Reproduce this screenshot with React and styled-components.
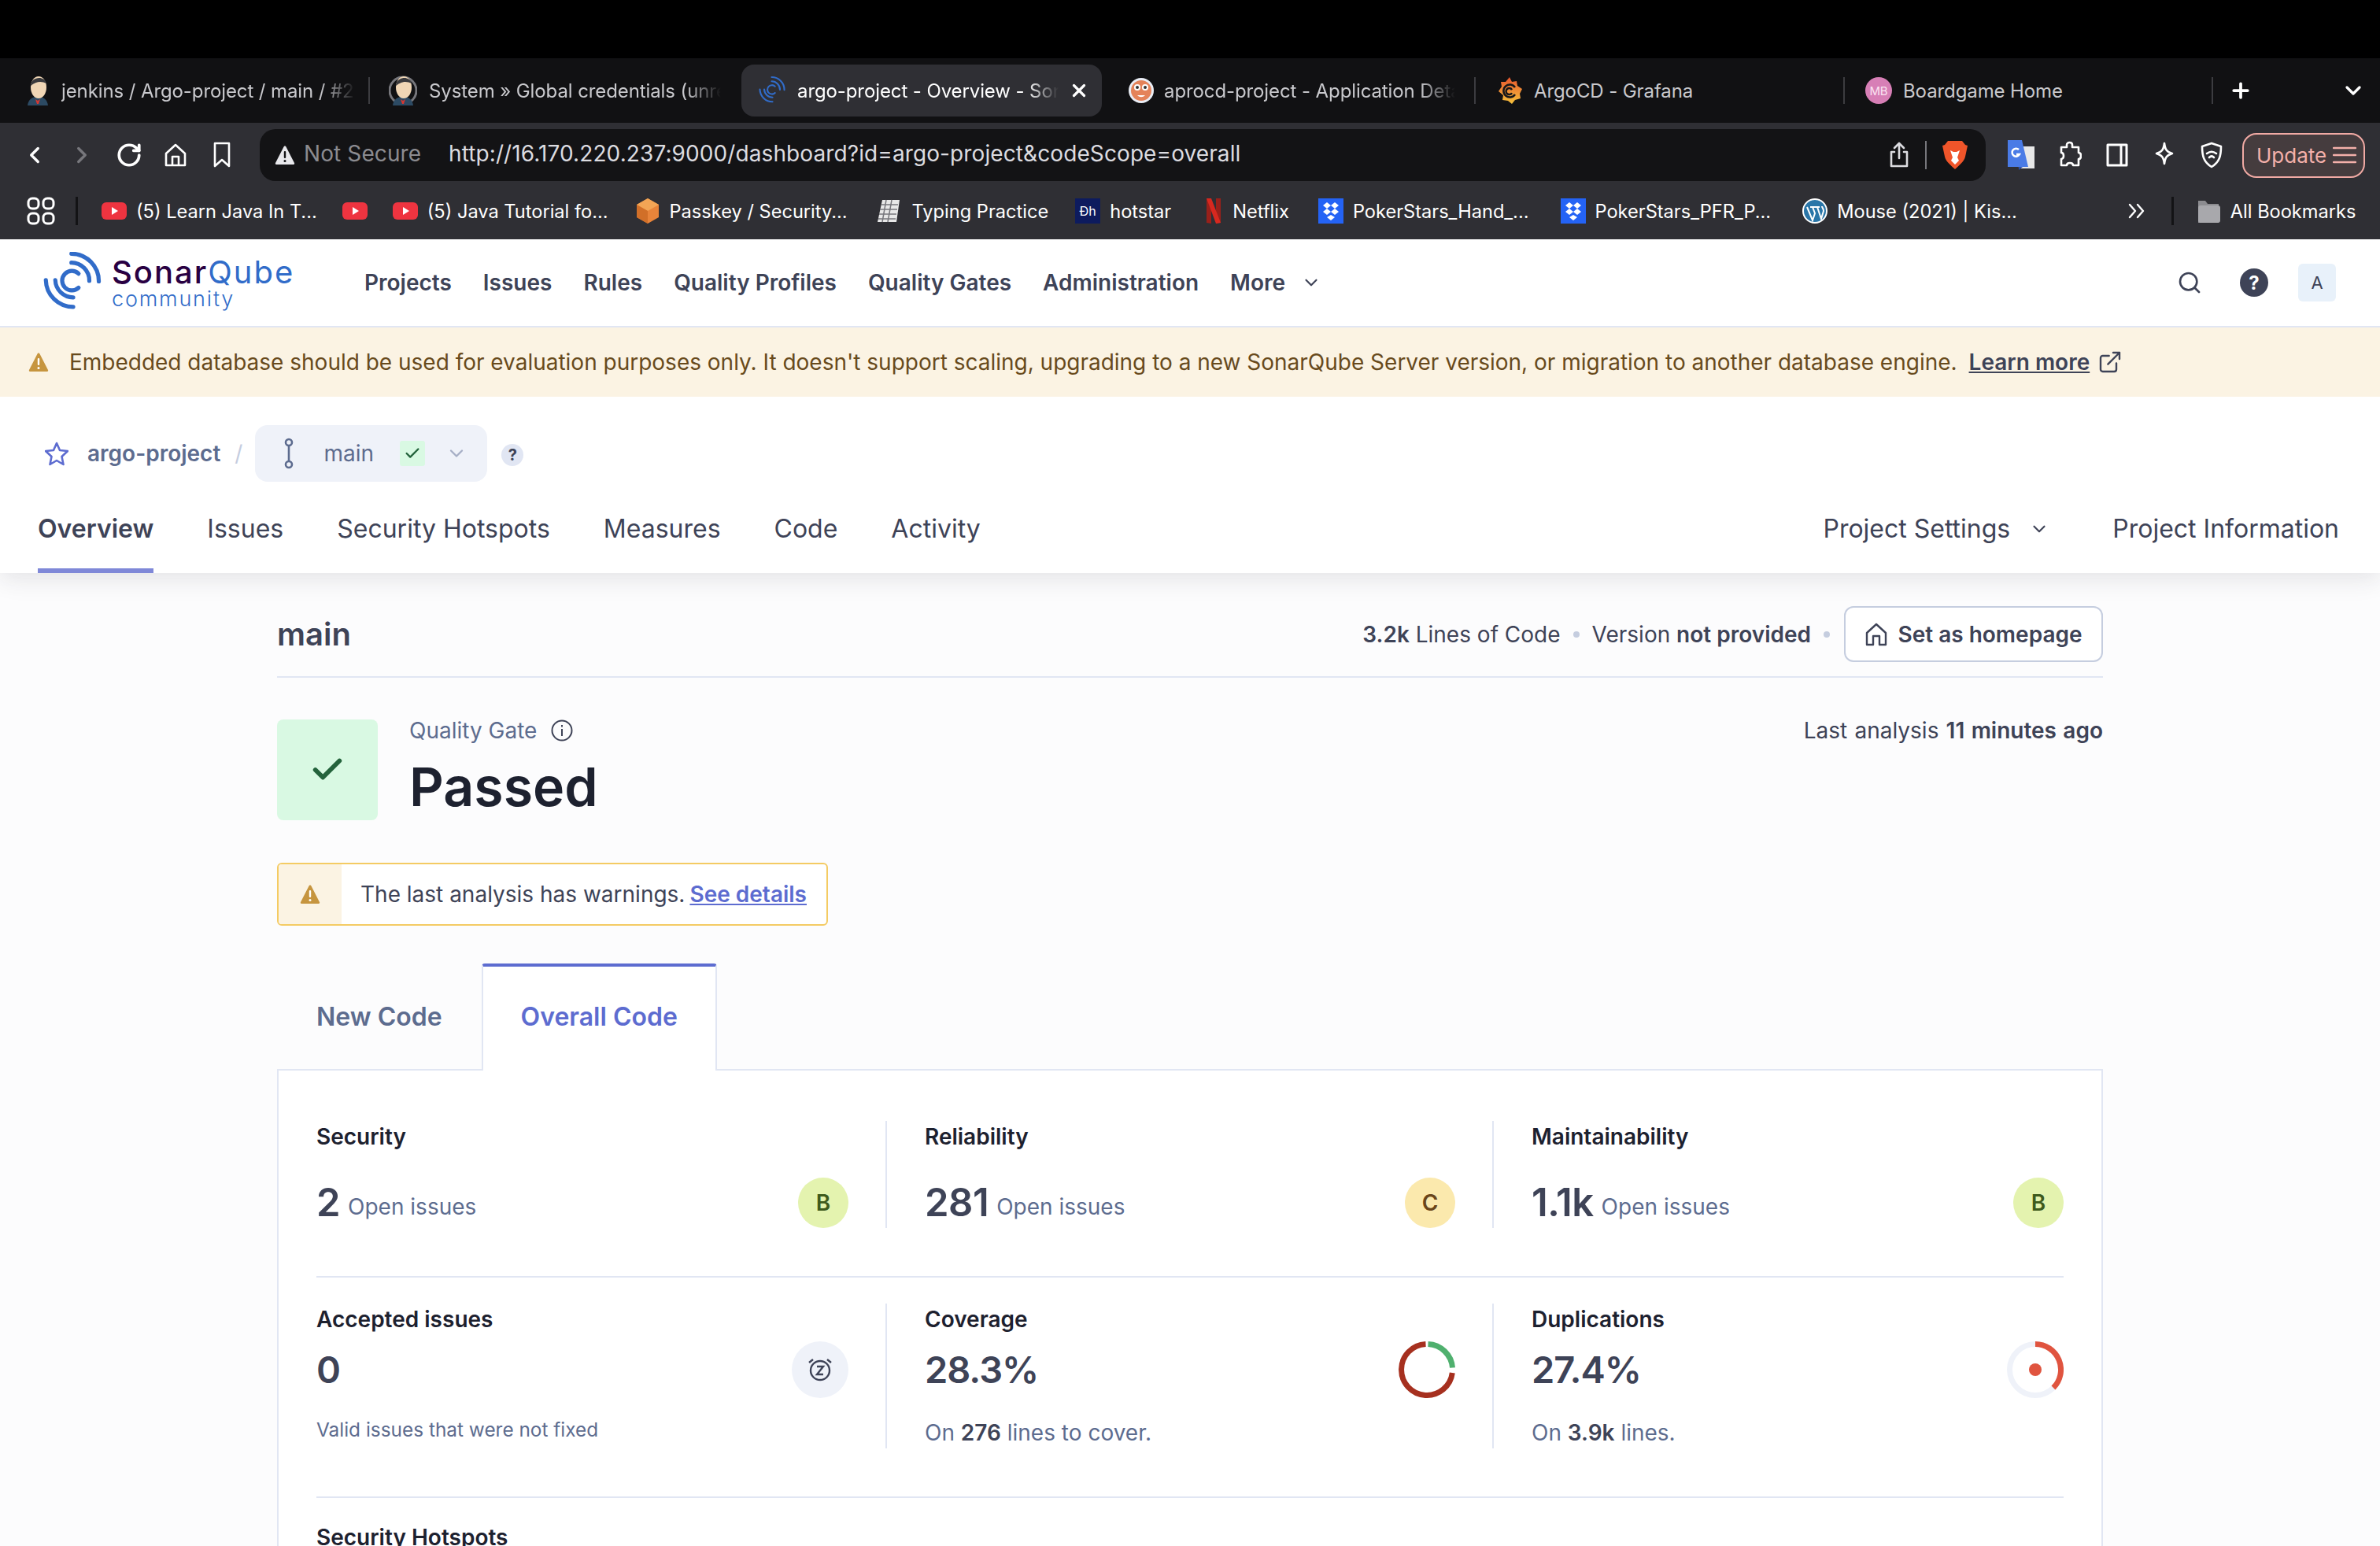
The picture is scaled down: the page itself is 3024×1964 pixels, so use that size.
import React from "react";
import styled, { createGlobalStyle } from "styled-components";
import { ChevronDown, ChevronLeft, ChevronRight, RotateCw, Search, Plus, X, ExternalLink, Check } from "lucide-react";

const GlobalStyle = createGlobalStyle`
	html, body {
		margin: 0;
		height: 100%;
		overflow: hidden;
		background: #fcfcfd;
		font-family: Inter, "Liberation Sans", sans-serif;
		color: #3e4357;
	}
	* { box-sizing: border-box; }
`;

const Sonar = ({ size = 32, color = "#316cc9", width = 16 }) => (
	<svg width={size} height={size} viewBox="0 0 240 240" fill="none" stroke={color} strokeWidth={width} strokeLinecap="round">
		<path d="M110 7A107 107 0 0 1 217 115" />
		<path d="M110 42A70 70 0 0 1 180 113" />
		<path d="M10 110A107 107 0 0 0 117 215" />
		<path d="M47 110A70 70 0 0 0 117 178" />
		<path d="M138 85A38 38 0 1 0 138 140" />
	</svg>
);

const Jenkins = ({ ring }) => (
	<svg width="36" height="40" viewBox="0 0 36 40">
		{ring && <circle cx="18" cy="20" r="17" fill="none" stroke="#77777c" strokeWidth="3" />}
		<path d="M5 39c1-8 6-11 13-11s12 3 13 11z" fill="#2c4a63" />
		<ellipse cx="19" cy="16" rx="10" ry="14" fill="#f0d6b5" />
		<path d="M9 14C9 3 26 0 29 11 23 8 16 8 9 14z" fill="#3a3a3d" />
		<path d="M15 31l3 2 3-2-2 6h-2z" fill="#d33833" />
	</svg>
);

const ArgoFace = () => (
	<svg width="34" height="34" viewBox="0 0 34 34">
		<circle cx="17" cy="17" r="16" fill="#e9edf5" />
		<circle cx="17" cy="17" r="13" fill="#e4835a" />
		<circle cx="12" cy="13" r="4" fill="#fff" />
		<circle cx="22" cy="13" r="4" fill="#fff" />
		<circle cx="12" cy="13" r="2" fill="#333" />
		<circle cx="22" cy="13" r="2" fill="#333" />
		<path d="M12 23c3 3 7 3 10 0z" fill="#fff" />
	</svg>
);

const Grafana = () => (
	<svg width="34" height="36" viewBox="0 0 34 36" fill="none">
		<defs>
			<linearGradient id="gf" x1="0" y1="1" x2="0" y2="0">
				<stop offset="0" stopColor="#f6c23c" />
				<stop offset="1" stopColor="#e8552d" />
			</linearGradient>
		</defs>
		<path d="M17 1l3 6 6-1 1 6 6 4-3 6 1 6-7 2-4 5-5-4-7-1 1-6-6-5 4-6-1-6 6 0z" fill="url(#gf)" />
		<path d="M24 14a8 8 0 1 0 0 9M20 17a4 4 0 1 0 0 4" stroke="#17171a" strokeWidth="2.500" />
	</svg>
);

const YouTube = () => (
	<svg width="32" height="32" viewBox="0 0 32 32">
		<rect y="5" width="32" height="22" rx="6" fill="#ee3440" />
		<path d="M13 11l8 5-8 5z" fill="#fff" />
	</svg>
);

const Passkey = () => (
	<svg width="32" height="32" viewBox="0 0 32 32">
		<path d="M16 0l14 8v16l-14 8-14-8V8z" fill="#e8843a" />
		<path d="M16 0l14 8-14 8-14-8z" fill="#f2a555" />
		<path d="M16 16v16l-14-8V8z" fill="#d16f28" />
	</svg>
);

const Typing = () => (
	<svg width="34" height="34" viewBox="0 0 34 34">
		<path d="M8 3h22l-4 28H2z" fill="#e8e8e8" />
		<path d="M7 9h21M5 15h22M4 21h22M3 27h22M13 3l-5 28M20 3l-5 28" stroke="#77777c" strokeWidth="1.500" />
	</svg>
);

const Hotstar = styled.span`
	width: 32px;
	height: 32px;
	background: #0d1b5e;
	color: #fff;
	font-size: 16px;
	display: flex;
	align-items: center;
	justify-content: center;
`;

const Netflix = () => (
	<svg width="24" height="32" viewBox="-2 0 24 32">
		<path d="M1 0h6v32l-6-1z" fill="#99201a" />
		<path d="M13 0h6v31l-6 1z" fill="#99201a" />
		<path d="M1 0h6l12 31-6 1z" fill="#d8281f" />
	</svg>
);

const Dropbox = () => (
	<svg width="32" height="32" viewBox="0 0 32 32">
		<rect width="32" height="32" fill="#2463f5" />
		<path d="M11 5l5 4-5 4-5-4zM21 5l5 4-5 4-5-4zM11 13l5 4-5 4-5-4zM21 13l5 4-5 4-5-4zM16 21l5 3-5 4-5-4z" fill="#fff" />
	</svg>
);

const Wordpress = () => (
	<svg width="32" height="32" viewBox="0 0 32 32">
		<circle cx="16" cy="16" r="15" fill="#2a76a8" stroke="#fff" strokeWidth="2" />
		<path d="M6 11l7 17 3-9-3-8h-3M13 11h9l-3 0 5 15 3-10c0-3-2-4-2-6" fill="none" stroke="#fff" strokeWidth="2" />
	</svg>
);

const Folder = () => (
	<svg width="32" height="34" viewBox="0 0 32 34">
		<path d="M3 4h9l3 4h14v24H3z" fill="#8c8c90" />
		<rect x="3" y="10" width="28" height="22" rx="3" fill="#a8a8ac" />
	</svg>
);

const Brave = () => (
	<svg width="32" height="38" viewBox="0 0 32 38">
		<path d="M7 1h18l4 5 3 1-3 14c-1 6-9 12-13 16C12 33 4 27 3 21L0 7l3-1z" fill="#f0552a" />
		<path d="M10 13l4 2h4l4-2-3 9 2 4-5 5-5-5 2-4z" fill="#fff" />
	</svg>
);

const Translate = () => (
	<svg width="34" height="38" viewBox="0 0 34 38">
		<path d="M12 8h22v28H14z" fill="#e8e8e8" />
		<path d="M0 0h18l8 34H0z" fill="#4a7be6" />
		<path d="M14 38l5-4h-5z" fill="#2d50a8" />
		<path d="M14 12a5 5 0 1 0 1 6h-4" fill="none" stroke="#fff" strokeWidth="2.500" />
	</svg>
);

const Apps = () => (
	<svg width="36" height="36" viewBox="0 0 36 36" fill="none" stroke="#fff" strokeWidth="3">
		<rect x="2" y="2" width="13" height="13" rx="5" />
		<rect x="21" y="2" width="13" height="13" rx="5" />
		<rect x="2" y="21" width="13" height="13" rx="5" />
		<rect x="21" y="21" width="13" height="13" rx="5" />
	</svg>
);

const ToolIcon = ({ d, w = 30, h = 36, sw = 2.6, color = "#fff" }) => (
	<svg width={w} height={h} viewBox={`0 0 ${w} ${h}`} fill="none" stroke={color} strokeWidth={sw} strokeLinejoin="round" strokeLinecap="round">
		<path d={d} />
	</svg>
);

const WarnTriangle = ({ size = 26, color = "#c6953f", mark = "#fff" }) => (
	<svg width={size} height={size} viewBox="0 0 26 26">
		<path d="M13 1.500c.8 0 1.200.4 1.600 1.200L25 23c.5 1-.1 2-1.200 2H2.200C1.100 25 .5 24 1 23L11.400 2.700c.4-.8.8-1.200 1.600-1.200z" fill={color} />
		<rect x="11.800" y="8" width="2.400" height="9" rx="1" fill={mark} />
		<circle cx="13" cy="20.500" r="1.500" fill={mark} />
	</svg>
);

const Donut = ({ arcs, dot }) => (
	<svg width="72" height="72" viewBox="0 0 72 72" fill="none" strokeWidth="7">
		<circle cx="36" cy="36" r="32.500" stroke={dot ? "#eff2f9" : "transparent"} />
		{arcs.map((a) => (
			<path key={a.d} d={a.d} stroke={a.color} />
		))}
		{dot && <circle cx="36" cy="36" r="8" fill="#e0543f" />}
	</svg>
);

const Top = styled.div`
	height: 74px;
	background: #000;
`;

const TabStrip = styled.div`
	height: 82px;
	background: #111113;
	display: flex;
	align-items: flex-start;
`;

const BrowserTab = styled.div`
	width: ${(p) => p.$w || 468}px;
	height: 66px;
	margin-top: 8px;
	margin-left: ${(p) => p.$ml || 0}px;
	padding-left: ${(p) => p.$pl || 30}px;
	display: flex;
	align-items: center;
	gap: ${(p) => p.$gap || 12}px;
	font-size: 24px;
	letter-spacing: -0.1px;
	color: ${(p) => (p.$active ? "#fff" : "#c9c9cd")};
	background: ${(p) => (p.$active ? "#2f2f34" : "transparent")};
	border-radius: 16px;
	flex-shrink: 0;
`;

const TabTitle = styled.span`
	flex: 1;
	white-space: nowrap;
	overflow: hidden;
	margin-right: ${(p) => p.$mr || 0}px;
	-webkit-mask-image: ${(p) => (p.$fade ? "linear-gradient(to right, #000 88%, transparent)" : "none")};
`;

const TabSep = styled.i`
	width: 2px;
	height: 34px;
	margin-top: 24px;
	background: #3c3c40;
	flex-shrink: 0;
`;

const FaviconText = styled.span`
	width: 34px;
	height: 34px;
	border-radius: 50%;
	background: #d77fb6;
	color: #fbe4f1;
	font-size: 15px;
	display: flex;
	align-items: center;
	justify-content: center;
	flex-shrink: 0;
`;

const TabEnd = styled.div`
	margin-left: 20px;
	height: 66px;
	margin-top: 8px;
	display: flex;
	align-items: center;
	gap: 112px;
	color: #fff;
`;

const Toolbar = styled.div`
	height: 74px;
	padding-top: 8px;
	background: #2f2f34;
	display: flex;
	align-items: flex-start;
`;

const NavButtons = styled.div`
	width: 330px;
	height: 66px;
	padding-left: 27px;
	display: flex;
	align-items: center;
	gap: 26px;
`;

const Address = styled.div`
	width: 2193px;
	height: 66px;
	border-radius: 20px;
	background: #131315;
	display: flex;
	align-items: center;
	padding-left: 19px;
	font-size: 28px;
	letter-spacing: 0.1px;
	color: #dcdce0;
	white-space: nowrap;
`;

const NotSecure = styled.span`
	margin-left: 11px;
	width: 184px;
	color: #8b8b90;
	padding-bottom: 5px;
`;

const Url = styled.span`
	flex: 1;
	padding-bottom: 5px;
`;

const AddressTools = styled.div`
	display: flex;
	align-items: center;
	gap: 20px;
	padding-right: 23px;
`;

const AddressSep = styled.i`
	width: 2px;
	height: 36px;
	background: #77777c;
`;

const Extensions = styled.div`
	margin-left: 28px;
	display: flex;
	align-items: center;
	gap: 30px;
	height: 66px;
`;

const UpdatePill = styled.div`
	width: 156px;
	height: 57px;
	margin-left: -6px;
	border: 2px solid #f1aaa4;
	border-radius: 18px;
	background: #453c3e;
	color: #f4b0aa;
	font-size: 26px;
	display: flex;
	align-items: center;
	padding-left: 16px;
	gap: 8px;
`;

const Bookmarks = styled.div`
	height: 74px;
	padding: 20px 0 0 34px;
	background: #2f2f34;
	display: flex;
	align-items: flex-start;
	font-size: 23.6px;
	color: #fff;
`;

const BookmarkItem = styled.div`
	height: 36px;
	margin-left: ${(p) => p.$ml || 0}px;
	display: flex;
	align-items: center;
	gap: 12px;
	white-space: nowrap;
	flex-shrink: 0;
`;

const BookmarkSep = styled.i`
	width: 3px;
	height: 36px;
	background: #131315;
	margin-left: ${(p) => p.$ml}px;
`;

const Page = styled.div`
	height: 1660px;
	overflow: hidden;
	background: #fcfcfd;
`;

const Header = styled.header`
	background: #fff;
	box-shadow: 0 6px 30px rgba(29, 33, 47, 0.12);
	position: relative;
	z-index: 1;
`;

const GlobalNav = styled.nav`
	height: 112px;
	border-bottom: 2px solid #e1e6f3;
	padding-right: 56px;
	display: flex;
	align-items: center;
`;

const Logo = styled.div`
	width: 463px;
	padding-left: 55px;
	display: flex;
	align-items: center;
	gap: 9px;
`;

const LogoText = styled.div`
	display: flex;
	flex-direction: column;
`;

const LogoName = styled.span`
	font-size: 40px;
	line-height: 42px;
	font-weight: 500;
	color: #290042;
	letter-spacing: 2px;
	b {
		font-weight: 400;
		color: #316cc9;
	}
`;

const LogoSub = styled.span`
	font-size: 27px;
	line-height: 26px;
	font-weight: 300;
	color: #316cc9;
	letter-spacing: 1.8px;
`;

const NavLink = styled.span`
	font-size: 28px;
	font-weight: 600;
	color: #3e4357;
	margin-right: 40px;
	white-space: nowrap;
	display: flex;
	align-items: center;
	gap: 20px;
`;

const NavEnd = styled.div`
	margin-left: auto;
	display: flex;
	align-items: center;
	gap: 38px;
`;

const SearchWrap = styled.span`
	display: flex;
	margin-right: 10px;
	color: #3e4357;
`;

const HelpDot = styled.span`
	width: 36px;
	height: 36px;
	border-radius: 50%;
	background: #3e4357;
	color: #fff;
	font-size: 24px;
	font-weight: 700;
	display: flex;
	align-items: center;
	justify-content: center;
`;

const Avatar = styled.span`
	width: 48px;
	height: 48px;
	border-radius: 6px;
	background: #e8f1fa;
	color: #3e4357;
	font-size: 22px;
	display: flex;
	align-items: center;
	justify-content: center;
`;

const Banner = styled.div`
	height: 88px;
	background: #fbf3e3;
	padding-left: 36px;
	display: flex;
	align-items: center;
	font-size: 28px;
	color: #684a1c;
	white-space: nowrap;
`;

const BannerText = styled.span`
	margin-left: 26px;
	letter-spacing: -0.01px;
`;

const BannerLink = styled.a`
	margin-left: 15px;
	font-weight: 600;
	text-decoration: underline;
	display: flex;
	align-items: center;
	gap: 10px;
	color: #3e4357;
`;

const Crumbs = styled.div`
	padding: 36px 0 0 57px;
	height: 108px;
	display: flex;
	align-items: flex-start;
`;

const CrumbName = styled.span`
	height: 72px;
	margin-left: 24px;
	display: flex;
	align-items: center;
	font-size: 28px;
	font-weight: 600;
	color: #5d6c8f;
	gap: 18px;
	i {
		font-style: normal;
		font-weight: 400;
		color: #c5cddf;
	}
`;

const BranchPill = styled.div`
	width: 295px;
	height: 72px;
	margin-left: 16px;
	border-radius: 16px;
	background: #eff2f9;
	padding-left: 34px;
	display: flex;
	align-items: center;
	font-size: 28px;
	color: #5d6c8f;
`;

const BranchName = styled.span`
	margin-left: 35px;
`;

const StatusBox = styled.span`
	width: 32px;
	height: 32px;
	margin-left: 33px;
	background: #d9f9e3;
	color: #24633c;
	border-radius: 3px;
	display: flex;
	align-items: center;
	justify-content: center;
`;

const PillChevron = styled.span`
	margin-left: 26px;
	color: #a6afc6;
	display: flex;
`;

const Question = styled.span`
	width: 28px;
	height: 28px;
	margin: 24px 0 0 18px;
	border-radius: 50%;
	background: #e1e6f3;
	color: #3e4357;
	font-size: 20px;
	font-weight: 700;
	display: flex;
	align-items: center;
	justify-content: center;
`;

const ProjectTabs = styled.div`
	height: 116px;
	padding: 0 52px 0 48px;
	display: flex;
	align-items: flex-start;
	font-size: 32px;
	white-space: nowrap;
`;

const ProjectTab = styled.span`
	height: 116px;
	line-height: 56px;
	padding-top: 32px;
	margin-right: ${(p) => p.$mr || 68}px;
	color: #3e4357;
	font-weight: ${(p) => (p.$active ? 600 : 400)};
	border-bottom: 6px solid ${(p) => (p.$active ? "#7f88d8" : "transparent")};
	margin-left: ${(p) => (p.$push ? "auto" : "0")};
	display: flex;
	align-items: flex-start;
	gap: 24px;
	&:last-child {
		margin-right: 0;
	}
	svg {
		margin-top: 15px;
	}
`;

const Main = styled.main`
	width: 2320px;
	margin: 0 auto;
`;

const BranchHead = styled.div`
	padding: 42px 0 18px;
	border-bottom: 2px solid #e1e6f3;
	display: flex;
	align-items: center;
	justify-content: space-between;
`;

const BranchTitle = styled.h2`
	margin: 0;
	font-size: 40px;
	font-weight: 600;
	color: #3e4357;
`;

const BranchMeta = styled.div`
	display: flex;
	align-items: center;
	gap: 16px;
	font-size: 28px;
	b {
		font-weight: 600;
	}
`;

const MetaDot = styled.i`
	width: 8px;
	height: 8px;
	border-radius: 50%;
	background: #c5cddf;
`;

const HomeButton = styled.button`
	width: 329px;
	height: 71px;
	margin-left: 2px;
	border: 2px solid #c5cddf;
	border-radius: 12px;
	background: #fff;
	color: #3e4357;
	font: 600 28px Inter, sans-serif;
	display: flex;
	align-items: center;
	justify-content: center;
	gap: 12px;
`;

const GateRow = styled.section`
	margin-top: 53px;
	display: flex;
	align-items: flex-start;
`;

const GateBox = styled.div`
	width: 128px;
	height: 128px;
	border-radius: 8px;
	background: #d9f9e3;
	color: #24633c;
	display: flex;
	align-items: center;
	justify-content: center;
`;

const GateText = styled.div`
	margin-left: 40px;
`;

const GateLabel = styled.div`
	height: 28px;
	display: flex;
	align-items: center;
	gap: 18px;
	font-size: 28px;
	color: #5d6c8f;
`;

const GateStatus = styled.div`
	margin-top: 15px;
	font-size: 68px;
	line-height: 84px;
	font-weight: 600;
	color: #1d212f;
`;

const LastAnalysis = styled.div`
	margin-left: auto;
	font-size: 28px;
	line-height: 28px;
	word-spacing: 1.3px;
	b {
		font-weight: 600;
	}
`;

const Warning = styled.div`
	width: 700px;
	height: 80px;
	margin-top: 54px;
	border: 2px solid #f4cb63;
	border-radius: 6px;
	background: #fff;
	display: flex;
	align-items: stretch;
	font-size: 28px;
	overflow: hidden;
`;

const WarningIcon = styled.div`
	width: 80px;
	background: #fbf3e3;
	display: flex;
	align-items: center;
	justify-content: center;
`;

const WarningText = styled.div`
	margin-left: 24px;
	display: flex;
	align-items: center;
	gap: 6px;
	white-space: nowrap;
	a {
		color: #5d6cd0;
		font-weight: 600;
		text-decoration: underline;
	}
`;

const CodeTabs = styled.div`
	margin-top: 48px;
	display: flex;
	position: relative;
`;

const CodeTab = styled.div`
	height: ${(p) => (p.$active ? 136 : 134)}px;
	padding: ${(p) => (p.$active ? "44px 48px" : "48px 50px")} 0;
	margin-bottom: ${(p) => (p.$active ? -2 : 0)}px;
	font-size: 32px;
	line-height: 40px;
	font-weight: 600;
	color: ${(p) => (p.$active ? "#5d6cd0" : "#5d6c8f")};
	background: ${(p) => (p.$active ? "#fff" : "transparent")};
	border: ${(p) => (p.$active ? "2px solid #e1e6f3" : "0")};
	border-top: ${(p) => (p.$active ? "4px solid #5d6cd0" : "0")};
	border-bottom: 0;
	border-radius: 4px 4px 0 0;
	position: relative;
	z-index: 1;
`;

const Panel = styled.section`
	border: 2px solid #e1e6f3;
	background: #fff;
	padding: 0 48px;
`;

const MetricRow = styled.div`
	display: grid;
	grid-template-columns: 723px 771px 1fr;
	padding: ${(p) => p.$top}px 0 ${(p) => p.$bottom}px;
	border-bottom: 2px solid #e1e6f3;
`;

const Cell = styled.div`
	&:not(:first-child) {
		border-left: 2px solid #e1e6f3;
		padding-left: 48px;
	}
	&:not(:last-child) {
		padding-right: 47px;
	}
`;

const MetricTitle = styled.div`
	font-size: 28px;
	line-height: 40px;
	font-weight: 600;
	color: #1d212f;
`;

const MetricBody = styled.div`
	margin-top: ${(p) => p.$mt}px;
	display: flex;
	align-items: center;
	justify-content: space-between;
`;

const Value = styled.span`
	font-size: 47px;
	font-weight: 600;
	line-height: 64px;
	letter-spacing: -1px;
	color: #3e4357;
	margin-right: 10px;
`;

const IssueValue = styled(Value)`
	font-size: 49px;
	letter-spacing: -0.5px;
`;

const ValueLabel = styled.span`
	font-size: 28px;
	color: #5d6c8f;
	vertical-align: 2px;
`;

const Rating = styled.span`
	width: 64px;
	height: 64px;
	border-radius: 50%;
	background: ${(p) => p.$bg};
	color: ${(p) => p.$fg};
	font-size: 28px;
	font-weight: 600;
	display: flex;
	align-items: center;
	justify-content: center;
`;

const ClockBadge = styled.span`
	width: 72px;
	height: 72px;
	border-radius: 50%;
	background: #eff2f9;
	display: flex;
	align-items: center;
	justify-content: center;
`;

const MetricNote = styled.div`
	margin-top: ${(p) => (p.$small ? 20 : 24)}px;
	line-height: 40px;
	font-size: ${(p) => (p.$small ? 24.4 : 28)}px;
	color: #5d6c8f;
	b {
		font-weight: 600;
		color: #3e4357;
	}
`;

const HotspotRow = styled.div`
	padding-top: 30px;
`;

const bookmarkList = [
	{ icon: <YouTube />, text: "(5) Learn Java In T...", ml: 30 },
	{ icon: <YouTube />, ml: 32 },
	{ icon: <YouTube />, text: "(5) Java Tutorial fo...", ml: 32 },
	{ icon: <Passkey />, text: "Passkey / Security...", ml: 34 },
	{ icon: <Typing />, text: "Typing Practice", ml: 36 },
	{ icon: <Hotstar>Ðh</Hotstar>, text: "hotstar", ml: 34 },
	{ icon: <Netflix />, text: "Netflix", ml: 42 },
	{ icon: <Dropbox />, text: "PokerStars_Hand_...", ml: 37 },
	{ icon: <Dropbox />, text: "PokerStars_PFR_P...", ml: 40 },
	{ icon: <Wordpress />, text: "Mouse (2021) | Kis...", ml: 40 },
];

const App = () => (
	<>
		<GlobalStyle />
		<Top />
		<TabStrip>
			<BrowserTab>
				<Jenkins />
				<TabTitle $fade $mr={16}>jenkins / Argo-project / main / #2</TabTitle>
			</BrowserTab>
			<TabSep />
			<BrowserTab $pl={24} $w={460} $gap={15}>
				<Jenkins ring />
				<TabTitle $fade $mr={14}>System » Global credentials (unrestricted)</TabTitle>
			</BrowserTab>
			<BrowserTab $active $pl={22} $w={458} $ml={12} $gap={13}>
				<Sonar size={36} width={14} />
				<TabTitle $fade>argo-project - Overview - SonarQube</TabTitle>
				<X size={26} strokeWidth={3} style={{ marginRight: 16 }} />
			</BrowserTab>
			<BrowserTab $w={473} $pl={33}>
				<ArgoFace />
				<TabTitle $fade $mr={24}>aprocd-project - Application Details</TabTitle>
			</BrowserTab>
			<TabSep />
			<BrowserTab $w={467} $pl={26} $gap={14}>
				<Grafana />
				<TabTitle>ArgoCD - Grafana</TabTitle>
			</BrowserTab>
			<TabSep />
			<BrowserTab $w={466} $pl={26} $gap={14}>
				<FaviconText>MB</FaviconText>
				<TabTitle>Boardgame Home</TabTitle>
			</BrowserTab>
			<TabSep />
			<TabEnd>
				<Plus size={30} strokeWidth={3} />
				<ChevronDown size={32} strokeWidth={2.5} />
			</TabEnd>
		</TabStrip>
		<Toolbar>
			<NavButtons>
				<ChevronLeft size={34} color="#fff" strokeWidth={2.4} />
				<ChevronRight size={34} color="#77777c" strokeWidth={2.4} />
				<RotateCw size={34} color="#fff" strokeWidth={2.6} />
				<ToolIcon d="M4 16L16 5l12 11v15H4zM12 31V20h8v11" />
				<ToolIcon d="M10 3h18v29l-9-8-9 8z" />
			</NavButtons>
			<Address>
				<WarnTriangle color="#e8e8ec" mark="#131315" />
				<NotSecure>Not Secure</NotSecure>
				<Url>http://16.170.220.237:9000/dashboard?id=argo-project&amp;codeScope=overall</Url>
				<AddressTools>
					<ToolIcon w={26} d="M13 22V3M7 9l6-6 6 6M7 14H3v18h20V14h-4" color="#dcdce0" />
					<AddressSep />
					<Brave />
				</AddressTools>
			</Address>
			<Extensions>
				<Translate />
				<ToolIcon d="M11 5c0-4 7-4 7 0v3h8v7c4 0 4 8 0 8v8h-7c0-4-8-4-8 0H4v-8c4 0 4-8 0-8V8h7z" />
				<ToolIcon d="M3 5h24v26H3zM20 5v26" sw={3} />
				<ToolIcon d="M15 3c1 8 3 11 10 13-7 2-9 5-10 13-1-8-3-11-10-13 7-2 9-5 10-13z" />
				<ToolIcon d="M15 3l12 4c0 12-2 20-12 26C5 27 3 19 3 7zM9 16c4-3 8-3 12 0M12 21c2-2 4-2 6 0" />
				<UpdatePill>
					Update
					<ToolIcon w={30} h={24} d="M1 3h28M1 12h28M1 21h28" sw={2.4} color="#f4b0aa" />
				</UpdatePill>
			</Extensions>
		</Toolbar>
		<Bookmarks>
			<Apps />
			<BookmarkSep $ml={26} />
			{bookmarkList.map((b, i) => (
				<BookmarkItem key={i} $ml={b.ml}>
					{b.icon}
					{b.text}
				</BookmarkItem>
			))}
			<BookmarkItem $ml={140}>
				<ToolIcon w={24} d="M3 10l7 8-7 8M13 10l7 8-7 8" sw={2.4} />
			</BookmarkItem>
			<BookmarkSep $ml={32} />
			<BookmarkItem $ml={28}>
				<Folder />
				All Bookmarks
			</BookmarkItem>
		</Bookmarks>
		<Page>
			<Header>
				<GlobalNav>
					<Logo>
						<Sonar size={78} />
						<LogoText>
							<LogoName>
								Sonar<b>Qube</b>
							</LogoName>
							<LogoSub>community</LogoSub>
						</LogoText>
					</Logo>
					<NavLink>Projects</NavLink>
					<NavLink>Issues</NavLink>
					<NavLink>Rules</NavLink>
					<NavLink>Quality Profiles</NavLink>
					<NavLink>Quality Gates</NavLink>
					<NavLink>Administration</NavLink>
					<NavLink>
						More
						<ChevronDown size={26} strokeWidth={2} />
					</NavLink>
					<NavEnd>
						<SearchWrap>
							<Search size={32} strokeWidth={2} />
						</SearchWrap>
						<HelpDot>?</HelpDot>
						<Avatar>A</Avatar>
					</NavEnd>
				</GlobalNav>
				<Banner>
					<WarnTriangle />
					<BannerText>
						Embedded database should be used for evaluation purposes only. It doesn't support scaling, upgrading to a new SonarQube Server version, or migration to another database engine.
					</BannerText>
					<BannerLink>
						Learn more
						<ExternalLink size={32} strokeWidth={1.8} />
					</BannerLink>
				</Banner>
				<Crumbs>
					<svg width="30" height="72" viewBox="0 0 30 72" fill="none" stroke="#5d6cd0" strokeWidth="2.600" strokeLinejoin="round">
						<path d="M15 23l4 9 10 1-7.500 7 2 10L15 45l-8.500 5 2-10L1 33l10-1z" />
					</svg>
					<CrumbName>
						argo-project
						<i>/</i>
					</CrumbName>
					<BranchPill>
						<svg width="18" height="40" viewBox="0 0 18 40" fill="none" stroke="#5d6c8f" strokeWidth="2.600">
							<circle cx="9" cy="6" r="4" />
							<circle cx="9" cy="34" r="4" />
							<path d="M9 10v20" />
						</svg>
						<BranchName>main</BranchName>
						<StatusBox>
							<Check size={22} strokeWidth={2.6} />
						</StatusBox>
						<PillChevron>
							<ChevronDown size={28} strokeWidth={2} />
						</PillChevron>
					</BranchPill>
					<Question>?</Question>
				</Crumbs>
				<ProjectTabs>
					<ProjectTab $active>Overview</ProjectTab>
					<ProjectTab>Issues</ProjectTab>
					<ProjectTab>Security Hotspots</ProjectTab>
					<ProjectTab>Measures</ProjectTab>
					<ProjectTab>Code</ProjectTab>
					<ProjectTab>Activity</ProjectTab>
					<ProjectTab $push $mr={80}>
						Project Settings
						<ChevronDown size={26} strokeWidth={2} />
					</ProjectTab>
					<ProjectTab>Project Information</ProjectTab>
				</ProjectTabs>
			</Header>
			<Main>
				<BranchHead>
					<BranchTitle>main</BranchTitle>
					<BranchMeta>
						<span>
							<b>3.2k</b> Lines of Code
						</span>
						<MetaDot />
						<span>
							Version <b>not provided</b>
						</span>
						<MetaDot />
						<HomeButton>
							<ToolIcon w={30} h={32} d="M3 14L15 3l12 11v15H19V18h-8v11H3z" sw={2.4} color="#3e4357" />
							Set as homepage
						</HomeButton>
					</BranchMeta>
				</BranchHead>
				<GateRow>
					<GateBox>
						<Check size={46} strokeWidth={3} />
					</GateBox>
					<GateText>
						<GateLabel>
							Quality Gate
							<svg width="28" height="28" viewBox="0 0 28 28" fill="none" stroke="#3e4357" strokeWidth="2">
								<circle cx="14" cy="14" r="12.500" />
								<path d="M14 12v9M14 7v2.500" />
							</svg>
						</GateLabel>
						<GateStatus>Passed</GateStatus>
					</GateText>
					<LastAnalysis>
						Last analysis <b>11 minutes ago</b>
					</LastAnalysis>
				</GateRow>
				<Warning>
					<WarningIcon>
						<WarnTriangle />
					</WarningIcon>
					<WarningText>
						The last analysis has warnings. <a>See details</a>
					</WarningText>
				</Warning>
				<CodeTabs>
					<CodeTab>New Code</CodeTab>
					<CodeTab $active>Overall Code</CodeTab>
				</CodeTabs>
				<Panel>
					<MetricRow $top={64} $bottom={61}>
						<Cell>
							<MetricTitle>Security</MetricTitle>
							<MetricBody $mt={32}>
								<span>
									<IssueValue>2</IssueValue>
									<ValueLabel>Open issues</ValueLabel>
								</span>
								<Rating $bg="#e4f3af" $fg="#3e5a1c">B</Rating>
							</MetricBody>
						</Cell>
						<Cell>
							<MetricTitle>Reliability</MetricTitle>
							<MetricBody $mt={32}>
								<span>
									<IssueValue>281</IssueValue>
									<ValueLabel>Open issues</ValueLabel>
								</span>
								<Rating $bg="#fbe9ad" $fg="#6a461a">C</Rating>
							</MetricBody>
						</Cell>
						<Cell>
							<MetricTitle>Maintainability</MetricTitle>
							<MetricBody $mt={32}>
								<span>
									<IssueValue>1.1k</IssueValue>
									<ValueLabel>Open issues</ValueLabel>
								</span>
								<Rating $bg="#e4f3af" $fg="#3e5a1c">B</Rating>
							</MetricBody>
						</Cell>
					</MetricRow>
					<MetricRow $top={33} $bottom={61}>
						<Cell>
							<MetricTitle>Accepted issues</MetricTitle>
							<MetricBody $mt={8}>
								<Value>0</Value>
								<ClockBadge>
									<svg width="30" height="32" viewBox="0 0 30 32" fill="none" stroke="#3e4357" strokeWidth="2.400">
										<circle cx="15" cy="17" r="12" />
										<path d="M11 12h8l-8 10h8M1 7l5-4M29 7l-5-4" />
									</svg>
								</ClockBadge>
							</MetricBody>
							<MetricNote $small>Valid issues that were not fixed</MetricNote>
						</Cell>
						<Cell>
							<MetricTitle>Coverage</MetricTitle>
							<MetricBody $mt={8}>
								<Value>28.3%</Value>
								<Donut
									arcs={[
										{ d: "M37.500 3.500A32.500 32.500 0 0 1 68.500 33.500", color: "#4fb06e" },
										{ d: "M68.300 40A32.500 32.500 0 1 1 34.500 3.500", color: "#a6301f" },
									]}
								/>
							</MetricBody>
							<MetricNote>
								On <b>276</b> lines to cover.
							</MetricNote>
						</Cell>
						<Cell>
							<MetricTitle>Duplications</MetricTitle>
							<MetricBody $mt={8}>
								<Value>27.4%</Value>
								<Donut dot arcs={[{ d: "M36 3.500A32.500 32.500 0 0 1 59 59", color: "#e0543f" }]} />
							</MetricBody>
							<MetricNote>
								On <b>3.9k</b> lines.
							</MetricNote>
						</Cell>
					</MetricRow>
					<HotspotRow>
						<MetricTitle>Security Hotspots</MetricTitle>
					</HotspotRow>
				</Panel>
			</Main>
		</Page>
	</>
);

export default App;
